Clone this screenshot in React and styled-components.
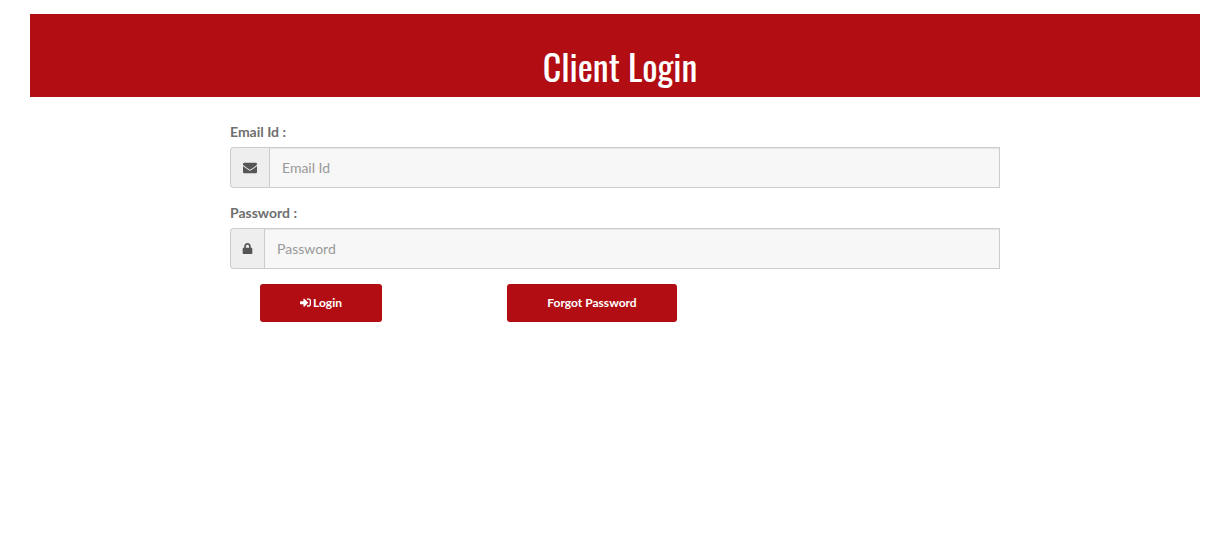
import React from "react";
import styled, { createGlobalStyle } from "styled-components";
import { FaEnvelope, FaLock, FaSignInAlt } from "react-icons/fa";

const GlobalStyle = createGlobalStyle`
  html, body {
    margin: 0;
    padding: 0;
    background: #fff;
    font-family: Lato, "Liberation Sans", sans-serif;
  }
  * {
    box-sizing: border-box;
  }
`;

function App() {
  return (
    <Page>
      <GlobalStyle />
      <Banner>
        <Title>Client Login</Title>
      </Banner>
      <Form>
        <Label>Email Id :</Label>
        <InputGroup>
          <Addon $width={39}>
            <FaEnvelope size={14} />
          </Addon>
          <Input placeholder="Email Id" />
        </InputGroup>
        <Label>Password :</Label>
        <InputGroup>
          <Addon $width={34}>
            <FaLock size={11} />
          </Addon>
          <Input placeholder="Password" />
        </InputGroup>
        <Buttons>
          <LoginButton>
            <FaSignInAlt size={11} /> Login
          </LoginButton>
          <ForgotButton>Forgot Password</ForgotButton>
        </Buttons>
      </Form>
    </Page>
  );
}

export default App;

const Page = styled.div`
  padding: 14px 24px 0 30px;
  min-height: 549px;
`;

const Banner = styled.div`
  height: 83px;
  background: #b20d13;
  display: flex;
  justify-content: center;
  padding: 29px 0 0 10px;
`;

const Title = styled.h1`
  margin: 0;
  color: #fff;
  font-family: "Oswald", "Roboto Condensed", "Liberation Sans Narrow", "Open Sans", sans-serif;
  font-size: 36px;
  line-height: 46px;
  font-weight: 400;
`;

const Form = styled.div`
  width: 770px;
  margin-left: 200px;
  padding-top: 26px;
`;

const Label = styled.div`
  color: #706f6f;
  font-size: 14px;
  font-weight: 700;
  line-height: 18px;
  margin-bottom: 6px;
`;

const InputGroup = styled.div`
  display: flex;
  height: 41px;
  margin-bottom: 16px;
`;

const Addon = styled.div`
  width: ${(p) => p.$width}px;
  display: flex;
  align-items: center;
  justify-content: center;
  background: #eee;
  color: #555;
  border: 1px solid #ccc;
  border-right: 0;
  border-radius: 4px 0 0 4px;
`;

const Input = styled.input`
  flex: 1;
  min-width: 0;
  padding: 0 12px;
  background: #f7f7f7;
  border: 1px solid #ccc;
  border-radius: 0;
  box-shadow: inset 0 1px 1px rgba(0, 0, 0, 0.075);
  font-family: inherit;
  font-size: 14px;
  color: #555;
  &::placeholder {
    color: #999;
    opacity: 1;
  }
`;

const Buttons = styled.div`
  display: flex;
  padding-left: 30px;
  margin-top: -1px;
`;

const LoginButton = styled.button`
  width: 122px;
  height: 38px;
  display: flex;
  align-items: center;
  justify-content: center;
  gap: 2px;
  padding: 0 0 2px;
  background: #b20d13;
  border: 0;
  border-radius: 3px;
  color: #fff;
  font-family: inherit;
  font-size: 12px;
  font-weight: 700;
`;

const ForgotButton = styled(LoginButton)`
  width: 170px;
  margin-left: 125px;
`;
